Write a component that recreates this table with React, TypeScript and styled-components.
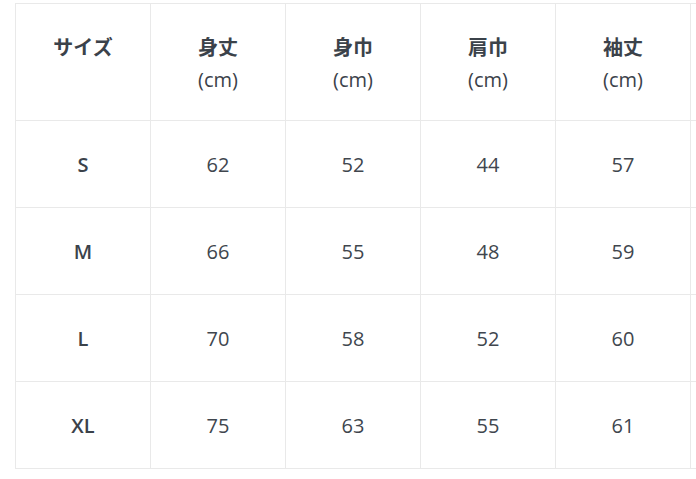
import React from "react";
import styled, { createGlobalStyle } from "styled-components";

const GlobalStyle = createGlobalStyle`
  html, body {
    margin: 0;
    padding: 0;
    background: #fff;
    overflow: hidden;
  }
  body {
    font-family: "Open Sans", "Noto Sans CJK JP", sans-serif;
    color: #3b424a;
  }
`;

const Page = styled.div`
  padding: 3px 0 0 15px;
  width: 681px;
  overflow: hidden;
`;

const Table = styled.table`
  border-collapse: collapse;
  table-layout: fixed;
  width: 810px;
`;

const Col = styled.col`
  width: 135px;
`;

const HeadRow = styled.tr`
  height: 117px;
`;

const BodyRow = styled.tr`
  height: 87px;
`;

const HeadCell = styled.th`
  border: 1px solid #e9e9e9;
  vertical-align: top;
  padding: 28px 0 0;
  font-size: 20px;
  line-height: 33px;
  text-align: center;
  font-weight: 400;
`;

const Title = styled.span`
  display: block;
  font-family: "Noto Sans CJK JP", sans-serif;
  font-weight: 700;
  line-height: 33px;
  margin-top: -2px;
`;

const Unit = styled.span`
  display: block;
  font-weight: 400;
`;

const SizeCell = styled.th`
  border: 1px solid #e9e9e9;
  font-size: 20px;
  font-weight: 600;
  text-align: center;
  vertical-align: middle;
  padding: 0;
`;

const Cell = styled.td`
  border: 1px solid #e9e9e9;
  font-size: 20px;
  text-align: center;
  vertical-align: middle;
  padding: 0;
  color: #40464e;
`;

const columns = ["身丈", "身巾", "肩巾", "袖丈"];

const rows: { size: string; values: number[] }[] = [
  { size: "S", values: [62, 52, 44, 57] },
  { size: "M", values: [66, 55, 48, 59] },
  { size: "L", values: [70, 58, 52, 60] },
  { size: "XL", values: [75, 63, 55, 61] },
];

export default function App() {
  return (
    <>
      <GlobalStyle />
      <Page>
        <Table>
          <colgroup>
            {[0, 1, 2, 3, 4, 5].map((i) => (
              <Col key={i} />
            ))}
          </colgroup>
          <thead>
            <HeadRow>
              <HeadCell>
                <Title>サイズ</Title>
              </HeadCell>
              {columns.map((c) => (
                <HeadCell key={c}>
                  <Title>{c}</Title>
                  <Unit>(cm)</Unit>
                </HeadCell>
              ))}
              <HeadCell />
            </HeadRow>
          </thead>
          <tbody>
            {rows.map((r) => (
              <BodyRow key={r.size}>
                <SizeCell>{r.size}</SizeCell>
                {r.values.map((v, i) => (
                  <Cell key={i}>{v}</Cell>
                ))}
                <Cell />
              </BodyRow>
            ))}
          </tbody>
        </Table>
      </Page>
    </>
  );
}
